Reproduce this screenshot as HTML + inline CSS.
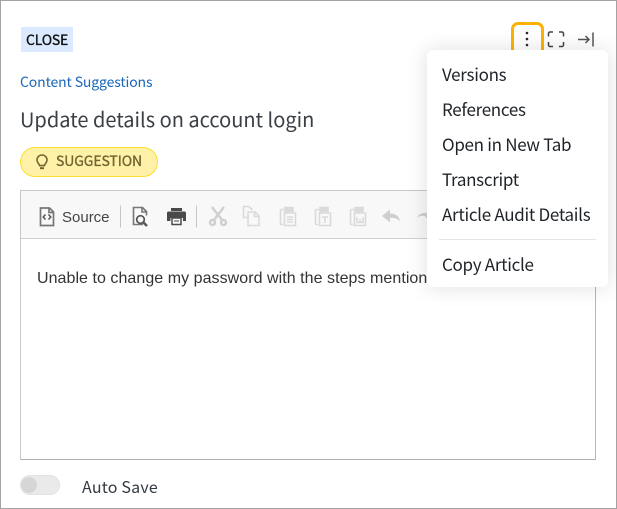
<!DOCTYPE html>
<html><head><meta charset="utf-8">
<style>
html,body{margin:0;padding:0;background:#fff}
#p{position:relative;width:617px;height:509px;overflow:hidden;background:#fff;font-family:"Noto Sans CJK JP","Liberation Sans",sans-serif;box-sizing:border-box;border:1px solid #a3a3a3}
.t{position:absolute;white-space:nowrap;line-height:20px;margin:-1px 0 0 -1px}
.a{position:absolute;margin:-1px 0 0 -1px}
.m{font-size:17px;color:#1f2328;left:442px;letter-spacing:-.3px}
.l{font-family:"Liberation Sans",sans-serif}
</style></head><body>
<div id="p">
<div class="a" style="left:21px;top:27px;width:52px;height:25px;background:#dbeafe"></div>
<div class="t" style="left:26px;top:30px;font-size:14px;color:#111;letter-spacing:-.2px;-webkit-text-stroke:.35px #111">CLOSE</div>
<div class="t" style="left:20px;top:72px;font-size:14px;color:#1a66b8;letter-spacing:-.13px">Content Suggestions</div>
<div class="t" style="left:20px;top:109px;font-size:20px;color:#3b4046">Update details on account login</div>
<div class="a" style="left:20px;top:147px;width:138px;height:30px;box-sizing:border-box;background:#fff2a8;border:1px solid #fbdd2c;border-radius:15px"></div>
<svg class="a" style="left:34px;top:153px" width="16" height="19" viewBox="0 0 16 19" fill="none" stroke="#736431" stroke-width="1.6"><path d="M5.600 12.600C5.400 10.800 3 10 3 7a5 5 0 0 1 10 0c0 3-2.400 3.800-2.600 5.600z"/><path d="M6 15.200h4" stroke-width="2"/></svg>
<div class="t" style="left:56px;top:151px;font-size:14px;color:#736431;letter-spacing:-.1px;-webkit-text-stroke:.35px #736431">SUGGESTION</div>

<div class="a" style="left:511px;top:22px;width:33px;height:40px;box-sizing:border-box;border:3px solid #ffb100;border-radius:7px"></div>
<svg class="a" style="left:511px;top:23px" width="90" height="32" viewBox="0 0 90 32" fill="none">
<circle cx="16" cy="10" r="1.300" fill="#2a2a2a"/><circle cx="16" cy="16" r="1.300" fill="#2a2a2a"/><circle cx="16" cy="22" r="1.300" fill="#2a2a2a"/>
<path d="M37.500 13.500v-3a1.500 1.500 0 0 1 1.500-1.500H42M48 9h3a1.500 1.500 0 0 1 1.500 1.500v3M52.500 19v3a1.500 1.500 0 0 1-1.500 1.500H48M42 23.500h-3a1.500 1.500 0 0 1-1.500-1.500V19" stroke="#444" stroke-width="1.500"/>
<path d="M67 16.500h11M74.500 13l3.500 3.500-3.500 3.500" stroke="#555" stroke-width="1.500"/><path d="M82 9.500v14" stroke="#555" stroke-width="1.500"/>
</svg>

<div class="a" style="left:20px;top:190px;width:576px;height:270px;box-sizing:border-box;border:1px solid #c8c8c8;border-bottom-color:#aeaeae;border-right-color:#b5b5b5;background:#fff"></div>
<div class="a" style="left:21px;top:191px;width:574px;height:47px;background:#f8f8f8;border-bottom:1px solid #d1d1d1"></div>

<svg class="a" style="left:21px;top:191px" width="420" height="47" viewBox="0 0 420 47" fill="none">
<path d="M19.500 17h9l4 4v13.500h-13z M28 17v4.500h4.500" stroke="#777" stroke-width="1.700"/>
<path d="M24.500 23.500l-2.300 2.500 2.300 2.500M27.500 23.500l2.300 2.500-2.300 2.500" stroke="#555" stroke-width="1.500"/>
<path d="M99.500 14.500v22" stroke="#c6c6c6"/>
<path d="M122 33.500h-9.500V16.500h9l4 4v4M121 16.500v4.500h5" stroke="#777" stroke-width="1.600"/>
<circle cx="119.500" cy="28.500" r="3.800" stroke="#555" stroke-width="1.700"/><path d="M122.500 31.500l3.500 3.500" stroke="#555" stroke-width="2.400"/>
<path d="M150 17h11v3h-11z" fill="#4a4a4a"/><path d="M147.500 20.500h16a1.500 1.500 0 0 1 1.500 1.500v8h-3v-3h-12.500v3H146v-8a1.500 1.500 0 0 1 1.500-1.500z" fill="#4a4a4a"/>
<path d="M151 27h9v6.500h-9z" stroke="#4a4a4a" stroke-width="1.500" fill="#f8f8f8"/><path d="M153 30h5" stroke="#4a4a4a"/>
<path d="M175.500 14.500v22" stroke="#c6c6c6"/>
<g stroke="#cfcfcf" stroke-width="2.400">
<path d="M191 16l10 13M203 16l-10 13"/><circle cx="191.500" cy="31.500" r="2.500"/><circle cx="202.500" cy="31.500" r="2.500"/>
</g>
<g stroke="#dadada" stroke-width="1.600">
<path d="M228 26.500h-5.500V15.500h5.500l3.500 3.500"/><path d="M227 21h7l4 4v9.500h-11z M233.500 21v4.500h4.500"/>
<path d="M263 18.500h-2.500a1 1 0 0 0-1 1v13a1 1 0 0 0 1 1h1.500"/><path d="M264 16.500h8v4h-8z" fill="#dadada"/><path d="M263.500 22h11v12.500h-11z"/><path d="M266 26h6M266 28.500h6M266 31h6"/>
<path d="M298 18.500h-2.500a1 1 0 0 0-1 1v13a1 1 0 0 0 1 1h1.500"/><path d="M299 16.500h8v4h-8z" fill="#dadada"/><path d="M298.500 22h11v12.500h-11z"/><path d="M301 26h6M304 26v6"/>
<path d="M333 18.500h-2.500a1 1 0 0 0-1 1v13a1 1 0 0 0 1 1h1.500"/><path d="M334 16.500h8v4h-8z" fill="#dadada"/><path d="M333.500 22h11v12.500h-11z"/><path d="M336 26v5.500h6V26M339 28v3"/>
</g>
<path d="M361 25l8-6.500v4c5 0 9 2 10 8-2.500-3-5.500-3.700-10-3.700v4.500z" fill="#cfcfcf"/>
<path d="M396 26.500c2-3.500 5-5 11-4.500v7l-3-4c-3-.5-6 0-8 1.500z" fill="#cfcfcf"/>
</svg>
<div class="t l" style="left:62px;top:208px;font-size:15px;color:#444">Source</div>
<div class="t l" style="left:37px;top:269px;font-size:16px;color:#333;letter-spacing:.05px">Unable to change my password with the steps mentioned</div>

<div class="a" style="left:427px;top:50px;width:181px;height:237px;background:#fff;border-radius:6px;box-shadow:0 0 22px rgba(0,0,0,.13)"></div>
<div class="t m" style="top:64px">Versions</div>
<div class="t m" style="top:99px">References</div>
<div class="t m" style="top:134px">Open in New Tab</div>
<div class="t m" style="top:169px">Transcript</div>
<div class="t m" style="top:204px">Article Audit Details</div>
<div class="a" style="left:439px;top:239px;width:157px;height:1px;background:#e6e6e6"></div>
<div class="t m" style="top:254px">Copy Article</div>

<div class="a" style="left:20px;top:475px;width:40px;height:20px;box-sizing:border-box;background:#eaeaea;border:1px solid #e2e2e2;border-radius:10px"></div>
<div class="a" style="left:21px;top:477px;width:16px;height:16px;background:#d6d6d6;border-radius:50%"></div>
<div class="t" style="left:82px;top:476px;font-size:16px;color:#333a42;letter-spacing:.2px">Auto Save</div>
</div>
</body></html>
